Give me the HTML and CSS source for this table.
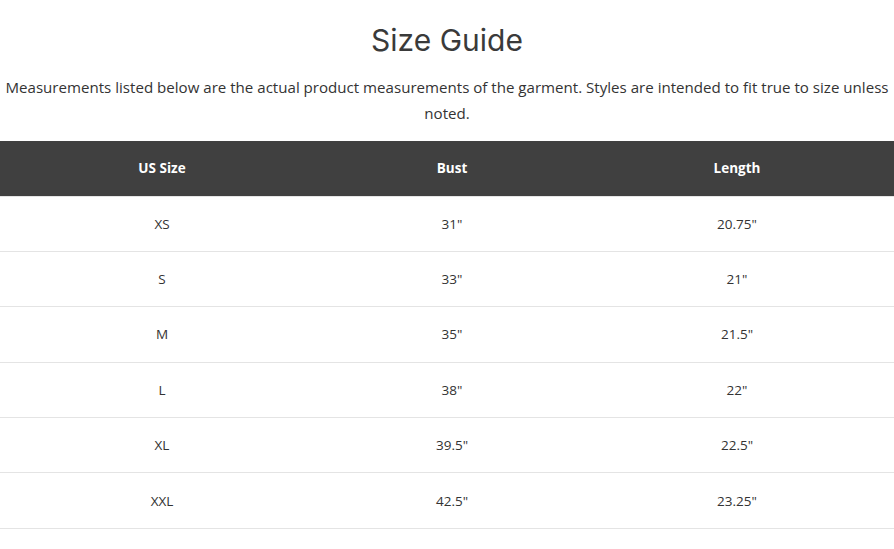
FILE: index.html
```html
<!DOCTYPE html>
<html lang="en">
<head>
    <meta charset="UTF-8">
    <meta name="viewport" content="width=device-width, initial-scale=1.0">
    <title>Size Guide</title>
    <link rel="stylesheet" href="styles.css">
</head>
<body>
    <div class="size-guide">
        <h1 class="title">Size Guide</h1>
        <p class="intro">Measurements listed below are the actual product measurements of the garment. Styles are intended to fit true to size unless noted.</p>

        <table class="size-table">
            <thead>
                <tr>
                    <th class="col-size">US Size</th>
                    <th class="col-bust">Bust</th>
                    <th class="col-length">Length</th>
                </tr>
            </thead>
            <tbody>
                <tr><td>XS</td><td>31"</td><td>20.75"</td></tr>
                <tr><td>S</td><td>33"</td><td>21"</td></tr>
                <tr><td>M</td><td>35"</td><td>21.5"</td></tr>
                <tr><td>L</td><td>38"</td><td>22"</td></tr>
                <tr><td>XL</td><td>39.5"</td><td>22.5"</td></tr>
                <tr><td>XXL</td><td>42.5"</td><td>23.25"</td></tr>
            </tbody>
        </table>
    </div>
</body>
</html>
```

FILE: styles.css
```css
* {
    margin: 0;
    padding: 0;
    box-sizing: border-box;
}

body {
    font-family: 'Open Sans', 'Noto Sans', sans-serif;
    background: #fff;
    color: #333;
}

.size-guide {
    padding-top: 20px;
    text-align: center;
}

.title {
    font-family: 'Inter', 'Lato', sans-serif;
    font-weight: 400;
    font-size: 30px;
    line-height: 40px;
    color: #3a3a3a;
    margin-bottom: 14px;
}

.intro {
    font-size: 15.1px;
    line-height: 26px;
    color: #333;
    margin-bottom: 15px;
}

.size-table {
    width: 100%;
    border-collapse: collapse;
    font-size: 13.5px;
}

.size-table th {
    background: #404040;
    color: #fff;
    font-weight: 700;
    height: 55px;
    border-bottom: 1px solid #e4e4e4;
}

.size-table td {
    height: 55.4px;
    color: #333;
    border-bottom: 1px solid #e4e4e4;
}

.col-size {
    width: 324px;
}

.col-bust {
    width: 256px;
}
```
